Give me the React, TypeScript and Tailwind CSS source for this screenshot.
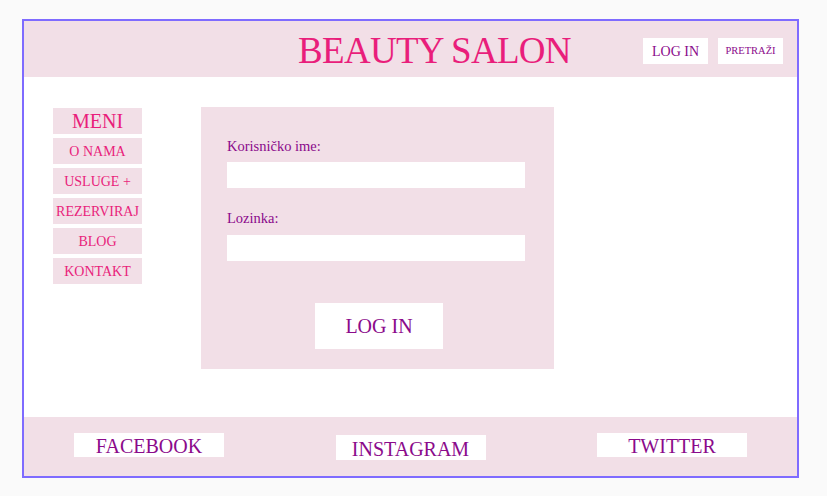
const menu = ['O NAMA', 'USLUGE +', 'REZERVIRAJ', 'BLOG', 'KONTAKT']

export default function App() {
    return (
        <div className="w-[827px] h-[496px] bg-[#fafafa] pt-[19px] pl-[22px] font-['Liberation_Serif',serif]">
            <div className="w-[777px] h-[459px] border-2 border-[#7f6bff] bg-white flex flex-col">
                {/* header */}
                <header className="h-[56px] bg-[#f2dfe7] flex items-center pl-[274px] pr-[14px]">
                    <h1 className="text-[37px] leading-none tracking-[-0.7px] text-[#e91e7b] pt-[3px]">BEAUTY SALON</h1>
                    <div className="ml-auto flex gap-[10px] mt-[4px]">
                        <button className="w-[65px] h-[26px] bg-white text-[14px] text-[#8b0a8b]">LOG IN</button>
                        <button className="w-[65px] h-[26px] bg-white text-[10.5px] text-[#8b0a8b]">PRETRAŽI</button>
                    </div>
                </header>

                {/* main */}
                <main className="flex-1 flex pl-[29px] pt-[30px]">
                    <nav className="w-[89px] flex flex-col gap-[4px] mt-[1px]">
                        <div className="h-[26px] bg-[#f2dfe7] text-[20px] leading-[27px] text-center text-[#e91e7b]">MENI</div>
                        {menu.map((item) => (
                            <div key={item} className="h-[26px] bg-[#f2dfe7] text-[14px] leading-[28px] text-center text-[#e91e7b]">
                                {item}
                            </div>
                        ))}
                    </nav>

                    <form className="ml-[59px] w-[353px] h-[262px] bg-[#f2dfe7] pt-[29px] pl-[26px]">
                        <label className="block text-[14.5px] leading-[20px] text-[#8b0a8b] mb-[6px]">Korisničko ime:</label>
                        <input className="block w-[298px] h-[26px] bg-white outline-none" />
                        <label className="block text-[14.5px] leading-[20px] text-[#8b0a8b] mt-[20px] mb-[7px]">Lozinka:</label>
                        <input type="password" className="block w-[298px] h-[26px] bg-white outline-none" />
                        <button type="button" className="block ml-[88px] mt-[42px] w-[128px] h-[46px] bg-white text-[20px] text-[#8b0a8b]">
                            LOG IN
                        </button>
                    </form>
                </main>

                {/* footer */}
                <footer className="h-[59px] bg-[#f2dfe7] flex items-start justify-between px-[50px] pt-[16px]">
                    <div className="w-[150px] h-[24px] bg-white text-[20px] leading-[26px] text-center text-[#8b0a8b]">FACEBOOK</div>
                    <div className="w-[150px] h-[25px] mt-[2px] bg-white text-[20px] leading-[28px] text-center text-[#8b0a8b]">INSTAGRAM</div>
                    <div className="w-[150px] h-[24px] bg-white text-[20px] leading-[26px] text-center text-[#8b0a8b]">TWITTER</div>
                </footer>
            </div>
        </div>
    )
}
